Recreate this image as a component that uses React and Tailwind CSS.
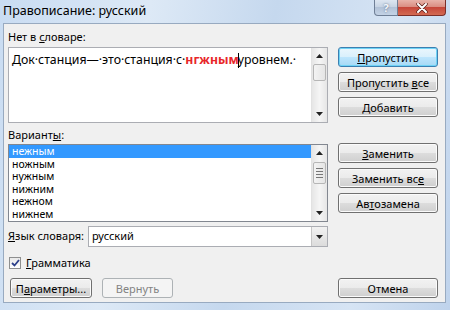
import clsx from 'clsx'

function Btn({ children, def, disabled, className }) {
  return (
    <div
      className={clsx(
        'h-5 flex items-center justify-center rounded-[3px] border text-[11px] leading-none',
        def && 'border-[#3c7fb1] shadow-[inset_0_0_0_1px_#6fd3f5] bg-[linear-gradient(#eaf6fd_0%,#d9f0fc_50%,#bee6fd_50%,#a7d9f5_100%)] text-black',
        disabled && 'border-[#adb2b5] bg-[#f4f4f4] text-[#838383]',
        !def && !disabled && 'border-[#707070] shadow-[inset_0_0_0_1px_#fbfbfb] bg-[linear-gradient(#f2f2f2_0%,#ebebeb_50%,#dddddd_50%,#cfcfcf_100%)] text-black',
        className
      )}
    >
      <span>{children}</span>
    </div>
  )
}

function Arrow({ up }) {
  return (
    <svg width="7" height="4" viewBox="0 0 7 4">
      <path d={up ? 'M0 4 L3.5 0 L7 4 Z' : 'M0 0 L3.5 4 L7 0 Z'} fill="#222" />
    </svg>
  )
}

function ScrollBar({ thumbTop, thumbHeight, grip }) {
  return (
    <div className="w-4 flex flex-col bg-[linear-gradient(90deg,#e6e6e6,#f5f5f5,#e6e6e6)] border-l border-[#e2e2e2]">
      <div className="h-4 flex items-center justify-center">
        <Arrow up />
      </div>
      <div className="flex-1 relative">
        <div
          className="absolute left-[1px] right-[1px] rounded-[2px] border border-[#b6b6b6] bg-[linear-gradient(90deg,#f3f3f3,#e5e5e5)] flex flex-col items-center justify-center gap-[2px]"
          style={{ top: thumbTop, height: thumbHeight }}
        >
          {grip && (
            <>
              <div className="w-[7px] h-px bg-[#777]" />
              <div className="w-[7px] h-px bg-[#777]" />
              <div className="w-[7px] h-px bg-[#777]" />
              <div className="w-[7px] h-px bg-[#777]" />
            </>
          )}
        </div>
      </div>
      <div className="h-4 flex items-center justify-center">
        <Arrow />
      </div>
    </div>
  )
}

const variants = ['нежным', 'ножным', 'нужным', 'нижним', 'нежном', 'нижнем']

export default function App() {
  return (
    <div className="w-[450px] h-[310px] flex flex-col bg-[linear-gradient(100deg,#c9dcf2_0%,#dde9f6_30%,#c5d8ee_55%,#d6e4f4_80%,#bfd3ec_100%)] font-['Noto_Sans',sans-serif] text-black overflow-hidden">
      {/* title bar */}
      <div className="h-[23px] flex items-start">
        <div className="pl-[3px] pt-[3px] text-[12.5px] leading-[16px]">Правописание: русский</div>
        <div className="ml-auto mr-[4px] flex">
          <div className="w-6 h-4 rounded-bl-[4px] border border-t-0 border-[#6f7f96] bg-[linear-gradient(#dde6f1_0%,#c5d2e2_50%,#b2c2d7_50%,#c4d3e6_100%)] flex items-center justify-center text-[11px] font-bold text-[#f4f7fb] leading-none [text-shadow:0_0_2px_#4d5f7a]">
            ?
          </div>
          <div className="w-12 h-4 rounded-br-[4px] border border-l-0 border-t-0 border-[#7b2f29] bg-[linear-gradient(#e8b3aa_0%,#d98a7e_50%,#c6473a_50%,#d36a52_100%)] flex items-center justify-center">
            <svg width="12" height="10" viewBox="0 0 12 10">
              <path d="M2 1 L10 9 M10 1 L2 9" stroke="#5a1e18" strokeWidth="3.4" strokeLinecap="round" />
              <path d="M2 1 L10 9 M10 1 L2 9" stroke="#fff" strokeWidth="2" strokeLinecap="round" />
            </svg>
          </div>
        </div>
      </div>

      {/* client area */}
      <div className="flex-1 ml-[3px] mr-[4px] mb-[7px] border border-[#98aac0] bg-[#f0f0f0] flex flex-col pl-[4px] pr-[7px] text-[11px]">
        <div className="flex">
          {/* left column */}
          <div className="w-[320px] flex flex-col">
            <div className="mt-[6px] h-[14px] leading-[14px]">
              Нет в <span className="underline">с</span>ловаре:
            </div>
            <div className="mt-[3px] h-[76px] border border-[#abadb3] bg-white flex">
              <div className="flex-1 pl-[3px] pt-[3px] text-[12.3px] leading-[17px] whitespace-nowrap overflow-hidden">
                Док·станция—·это·станция·с·
                <span className="text-[#e8262a] font-bold">нгжным</span>
                <span className="inline-block w-px h-[15px] bg-black align-middle -mx-px" />
                уровнем.·
              </div>
              <ScrollBar thumbTop={0} thumbHeight={17} />
            </div>
            <div className="mt-[5px] h-[14px] leading-[14px]">
              Вариант<span className="underline">ы</span>:
            </div>
            <div className="mt-[2px] h-[78px] border border-[#828790] bg-white flex">
              <div className="flex-1 overflow-hidden">
                {variants.map((v, i) => (
                  <div
                    key={v}
                    className={clsx(
                      'h-[12.5px] leading-[12.5px] pl-[3px] text-[10.5px]',
                      i === 0 && 'bg-[#3399ff] text-white'
                    )}
                  >
                    {v}
                  </div>
                ))}
              </div>
              <ScrollBar thumbTop={1} thumbHeight={22} grip />
            </div>
            <div className="mt-[4px] h-[21px] flex items-center">
              <div className="w-[80px]">
                <span className="underline">Я</span>зык словаря:
              </div>
              <div className="flex-1 h-full border border-[#abadb3] bg-white flex">
                <div className="flex-1 pl-[3px] flex items-center">русский</div>
                <div className="w-4 border-l border-[#c6c6c6] bg-[linear-gradient(#f2f2f2,#dcdcdc)] flex items-center justify-center">
                  <Arrow />
                </div>
              </div>
            </div>
          </div>

          {/* right column */}
          <div className="ml-[10px] w-[100px] flex flex-col mt-[23px] gap-[5px]">
            <Btn def>
              <span className="underline">П</span>ропустить
            </Btn>
            <Btn>
              Пропустить <span className="underline">в</span>се
            </Btn>
            <Btn>
              <span className="underline">Д</span>обавить
            </Btn>
            <Btn className="mt-[21px]">
              <span className="underline">З</span>аменить
            </Btn>
            <Btn>
              Заменить вс<span className="underline">е</span>
            </Btn>
            <Btn>
              Ав<span className="underline">т</span>озамена
            </Btn>
          </div>
        </div>

        <div className="mt-[9px] h-[14px] flex items-center gap-[5px] pl-[1px]">
          <div className="w-3 h-3 border border-[#8e8f8f] bg-[linear-gradient(#e9e9e9,#fff)] flex items-center justify-center">
            <svg width="9" height="8" viewBox="0 0 9 8">
              <path d="M1 4 L3.5 6.5 L8 1" stroke="#2c3f8a" strokeWidth="1.8" fill="none" />
            </svg>
          </div>
          <div>
            <span className="underline">Г</span>рамматика
          </div>
        </div>

        <div className="mt-[8px] flex">
          <Btn className="ml-[2px] w-[82px]">
            П<span className="underline">а</span>раметры...
          </Btn>
          <Btn disabled className="ml-[10px] w-[71px]">
            Вернуть
          </Btn>
          <Btn className="ml-auto w-[100px]">Отмена</Btn>
        </div>
      </div>
    </div>
  )
}
